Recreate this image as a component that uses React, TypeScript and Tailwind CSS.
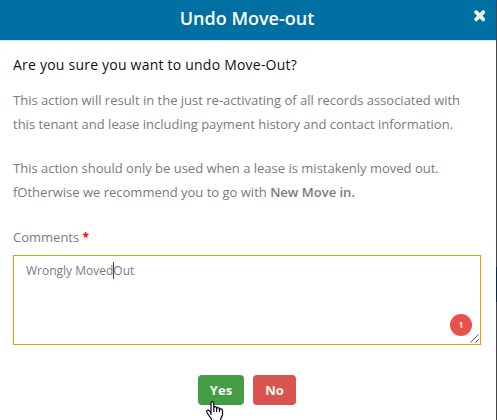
function CloseIcon() {
  return (
    <svg viewBox="302 366 1188 1188" className="h-[11.5px] w-[11.5px] fill-[#e6f1f6]">
      <path d="M1490 1322q0 40-28 68l-136 136q-28 28-68 28t-68-28l-294-294-294 294q-28 28-68 28t-68-28l-136-136q-28-28-28-68t28-68l294-294-294-294q-28-28-28-68t28-68l136-136q28-28 68-28t68 28l294 294 294-294q28-28 68-28t68 28l136 136q28 28 28 68t-28 68l-294 294 294 294q28 28 28 68z" />
    </svg>
  );
}

function HandCursor() {
  return (
    <svg viewBox="0 0 18 22" className="absolute top-[26px] left-[8px] h-[22px] w-[18px]">
      <path
        d="M5 14V2.2C5 1.2 5.6.6 6.4.6S7.8 1.2 7.8 2.2V7c0-1 .6-1.4 1.4-1.4s1.4.5 1.4 1.6V8c0-1 .6-1.4 1.4-1.4s1.5.5 1.5 1.6V9c0-.9.6-1.2 1.3-1.2 1 0 1.7.6 1.7 1.7V14l-1.8 4v3.6H5.5V18L2.5 14 .9 11.2C.4 10.2.6 9.5 1.4 9.2c.8-.3 1.5 0 2.1.8L5 12z"
        fill="white"
        stroke="#05051a"
        strokeWidth="1.2"
      />
      <path d="M7.8 6.5V11M10.6 7.5V11M13.5 8.5V11" stroke="#05051a" strokeWidth="1.2" />
    </svg>
  );
}

export default function App() {
  return (
    <div className="flex h-[420px] w-[497px] overflow-hidden bg-white font-['Open_Sans',sans-serif] text-[13px] text-[#7b7b7b]">
      <div className="flex flex-1 flex-col">
        <header className="grid h-[41px] grid-cols-[1fr_auto_1fr] border-b border-[#dfe7ea] bg-[#0070a3]">
          <h1 className="col-start-2 pt-[6px] pr-[2px] text-[18px] leading-6 font-semibold text-white">Undo Move-out</h1>
          <button aria-label="Close" className="mt-[10px] mr-[11px] self-start justify-self-end">
            <CloseIcon />
          </button>
        </header>

        <main className="flex flex-col px-[13px] pt-[14px]">
          <h2 className="text-[14px] leading-5 font-medium tracking-[0.22px] text-[#111]">
            Are you sure you want to undo Move-Out?
          </h2>
          <p className="mt-[13px] leading-6 whitespace-nowrap">
            This action will result in the just re-activating of all records associated with
            <br />
            this tenant and lease including payment history and contact information.
          </p>
          <p className="mt-5 leading-6 whitespace-nowrap">
            This action should only be used when a lease is mistakenly moved out.
            <br />
            fOtherwise we recommend you to go with <b className="font-semibold">New Move in.</b>
          </p>

          <label className="mt-[23px] h-5 leading-5">
            Comments <span className="text-[12px] font-bold text-[#f00]">*</span>
          </label>
          <div className="relative mt-2 h-[90px] w-[468px] border border-[#f89406] px-3 pt-[6px] text-[12px] leading-[18px]">
            Wrongly Moved
            <span className="relative">
              <span className="absolute top-0 left-0 h-[17px] w-px bg-[#444]" />
              Out
            </span>
            <span className="absolute right-2 bottom-2 flex size-[22px] items-center justify-center rounded-full bg-[#e9524a] text-[8px] font-bold text-white">
              1
            </span>
            <svg viewBox="0 0 9 9" className="absolute right-[1px] bottom-[1px] size-[9px]">
              <path d="M.5 8.5l8-8M5.5 8.5l3-3" stroke="#555" />
            </svg>
          </div>

          <div className="mt-[30px] ml-[185px] flex gap-[9px] leading-5 font-bold text-[#f4faf4]">
            <button className="relative h-[30px] w-[46px] rounded bg-[#449d44]">
              Yes
              <HandCursor />
            </button>
            <button className="h-[30px] w-[43px] rounded bg-[#d9534f]">No</button>
          </div>
        </main>
      </div>
      <div className="w-px bg-[#444447] pt-[267px]">
        <div className="h-[35px] bg-[#002b45]" />
      </div>
    </div>
  );
}
